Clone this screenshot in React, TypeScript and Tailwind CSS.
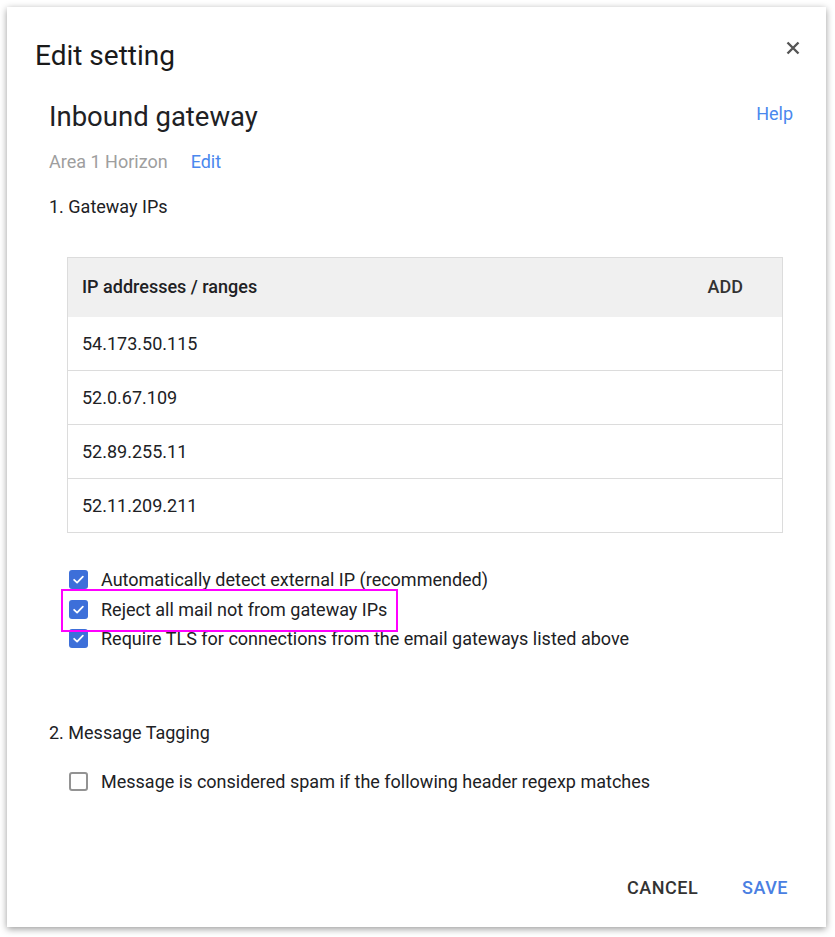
import React from "react";

const ips = ["54.173.50.115", "52.0.67.109", "52.89.255.11", "52.11.209.211"];

function Check({ checked }: { checked: boolean }) {
  if (checked) {
    return (
      <span className="flex h-[19px] w-[19px] shrink-0 items-center justify-center rounded-[3px] bg-[#3d6fd9]">
        <svg width="13" height="13" viewBox="0 0 14 14" fill="none">
          <path d="M2.3 7.3 L5.5 10.3 L11.7 3.9" stroke="white" strokeWidth="1.9" strokeLinecap="round" strokeLinejoin="round" />
        </svg>
      </span>
    );
  }
  return <span className="h-[19px] w-[19px] shrink-0 rounded-[3px] border-2 border-[#939393] bg-white" />;
}

export default function App() {
  return (
    <div className="min-h-[937px] w-[835px] bg-white pl-[7px] pt-[7px]" style={{ fontFamily: "Roboto, 'Liberation Sans', sans-serif" }}>
      <div className="relative flex h-[920px] w-[819px] flex-col bg-white shadow-[0_2px_7px_rgba(0,0,0,0.4)]">
        {/* Title row */}
        <div className="flex items-start justify-between pl-[28px] pr-[26px] pt-[31px]">
          <h1 className="text-[28px] leading-[36px] text-[#1a1a1a]">Edit setting</h1>
          <svg width="14" height="14" viewBox="0 0 14 14" className="mt-[3px]">
            <path d="M1.5 1.5 L12.5 12.5 M12.5 1.5 L1.5 12.5" stroke="#555" strokeWidth="2.4" strokeLinecap="butt" />
          </svg>
        </div>

        <div className="pl-[42px] pr-[33px]">
          <div className="mt-[25px] flex items-start justify-between">
            <h2 className="text-[27.5px] leading-[36px] text-[#202124]">Inbound gateway</h2>
            <a className="mt-[3px] text-[18px] leading-[24px] text-[#4a88ee]">Help</a>
          </div>
          <div className="mt-[15px] flex items-center text-[18px] leading-[24px]">
            <span className="text-[#9e9e9e]">Area 1 Horizon</span>
            <a className="ml-[23px] text-[#4a88ee]">Edit</a>
          </div>
          <div className="mt-[21px] text-[18px] leading-[24px] text-[#202124]">1. Gateway IPs</div>

          {/* Table */}
          <div className="ml-[18px] mt-[38px] w-[716px] border border-[#dcdcdc] text-[18px] text-[#202124]">
            <div className="flex h-[59px] items-center justify-between bg-[#f0f0f0] pb-[3px] pl-[14px] pr-[39px] font-medium">
              <span>IP addresses / ranges</span>
              <span className="text-[#333]">ADD</span>
            </div>
            {ips.map((ip, i) => (
              <div key={ip} className={`flex items-center pl-[14px] ${i > 0 ? "h-[54px] border-t border-[#dcdcdc]" : "h-[53px]"}`}>
                {ip}
              </div>
            ))}
          </div>

          {/* Checkboxes */}
          <div className="ml-[20px] mt-[32px] flex flex-col text-[18px] leading-[29.5px] text-[#202124]">
            <label className="flex items-center gap-[13px]">
              <Check checked />
              <span>Automatically detect external IP (recommended)</span>
            </label>
            <label className="relative flex items-center gap-[13px]">
              <Check checked />
              <span>Reject all mail not from gateway IPs</span>
              <span className="pointer-events-none absolute left-[-8px] top-[-6px] h-[43px] w-[337px] border-2 border-[#ff00ff]" />
            </label>
            <label className="flex items-center gap-[13px]">
              <Check checked />
              <span>Require TLS for connections from the email gateways listed above</span>
            </label>
          </div>

          <div className="mt-[67px] text-[18px] leading-[24px] text-[#202124]">2. Message Tagging</div>
          <label className="ml-[20px] mt-[25px] flex items-center gap-[13px] text-[18px] leading-[24px] text-[#202124]">
            <Check checked={false} />
            <span>Message is considered spam if the following header regexp matches</span>
          </label>
        </div>

        <div className="mt-auto flex justify-end gap-[44px] pb-[26px] pr-[38px] text-[18px] font-medium tracking-[0.5px]">
          <button className="text-[#333]">CANCEL</button>
          <button className="text-[#4a7fe2]">SAVE</button>
        </div>
      </div>
    </div>
  );
}
